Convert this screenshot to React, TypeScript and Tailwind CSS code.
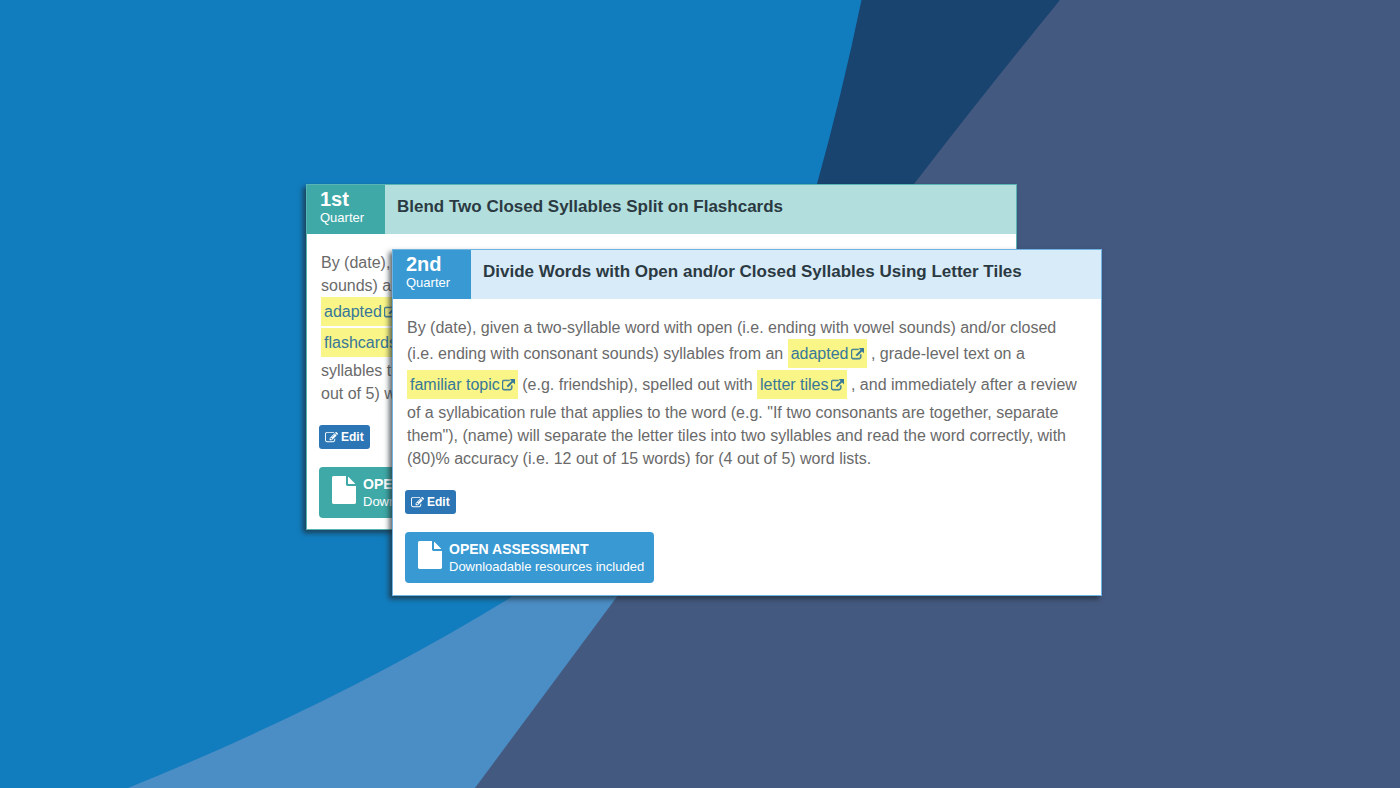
import type { ReactNode } from 'react';
import clsx from 'clsx';

type Tone = 'teal' | 'blue';

const tones = {
  teal: { border: 'border-[#58b5b3]', solid: 'bg-[#3fa9a8]', light: 'bg-[#b2dfdd]' },
  blue: { border: 'border-[#6fb4e3]', solid: 'bg-[#3899d3]', light: 'bg-[#d8ebf9]' },
};

function ExternalIcon() {
  return (
    <svg viewBox="0 0 1792 1792" className="mt-px size-[13px] fill-current stroke-current" strokeWidth="70" aria-hidden="true">
      <path d="M1408 928v320q0 119-84.500 203.500t-203.500 84.500h-832q-119 0-203.500-84.500t-84.500-203.500v-832q0-119 84.500-203.500t203.500-84.500h704q14 0 23 9t9 23v64q0 14-9 23t-23 9h-704q-66 0-113 47t-47 113v832q0 66 47 113t113 47h832q66 0 113-47t47-113v-320q0-14 9-23t23-9h64q14 0 23 9t9 23zm384-864v512q0 26-19 45t-45 19-45-19l-176-176-652 652q-10 10-23 10t-23-10l-114-114q-10-10-10-23t10-23l652-652-176-176q-19-19-19-45t19-45 45-19h512q26 0 45 19t19 45z" />
    </svg>
  );
}

function EditIcon() {
  return (
    <svg viewBox="0 0 1792 1792" className="size-[13px] fill-current" aria-hidden="true">
      <path d="M888 1184l116-116-152-152-116 116v56h96v96h56zm440-720q-16-16-33 1l-350 350q-17 17-1 33t33-1l350-350q17-17 1-33zm80 594v190q0 119-84.500 203.500t-203.500 84.500h-832q-119 0-203.500-84.500t-84.500-203.500v-832q0-119 84.500-203.500t203.500-84.500h832q63 0 117 25 15 7 18 23 3 17-9 29l-49 49q-14 14-32 8-23-6-45-6h-832q-66 0-113 47t-47 113v832q0 66 47 113t113 47h832q66 0 113-47t47-113v-126q0-13 9-22l64-64q15-15 35-7t20 29zm-96-738l288 288-672 672h-288v-288zm444 132l-92 92-288-288 92-92q28-28 68-28t68 28l152 152q28 28 28 68t-28 68z" />
    </svg>
  );
}

function FileIcon() {
  return (
    <svg viewBox="128 0 1536 1792" className="h-[28px] w-[24px] fill-current" aria-hidden="true">
      <path d="M1152 512v-472q22 14 36 28l408 408q14 14 28 36h-472zm-128 32q0 40 28 68t68 28h544v1056q0 40-28 68t-68 28h-1344q-40 0-68-28t-28-68v-1600q0-40 28-68t68-28h800v544z" />
    </svg>
  );
}

function Term({ children }: { children: ReactNode }) {
  return (
    <a
      href="#"
      className="mb-[2px] inline-flex h-[29px] items-center gap-[2px] bg-[#f9f586] px-[3px] align-middle text-[#37789a]"
    >
      {children}
      <ExternalIcon />
    </a>
  );
}

interface GoalCardProps {
  tone: Tone;
  quarter: string;
  title: string;
  className?: string;
  children: ReactNode;
}

function GoalCard({ tone, quarter, title, className, children }: GoalCardProps) {
  const t = tones[tone];
  return (
    <article
      className={clsx(
        'col-start-1 row-start-1 flex flex-col border bg-white shadow-[-3px_3px_5px_rgba(30,40,45,0.7)]',
        t.border,
        className,
      )}
    >
      <header className={clsx('flex h-[49px]', t.light)}>
        <div className={clsx('w-[78px] shrink-0 pt-[5px] pl-[13px] text-white', t.solid)}>
          <div className="text-[20px] leading-[19px] font-bold">{quarter}</div>
          <div className="text-[13px] leading-[18px]">Quarter</div>
        </div>
        <h2 className="pt-[10px] pl-3 text-[17px] leading-[24px] font-bold whitespace-nowrap text-[#2b3a42]">{title}</h2>
      </header>
      <div className="flex flex-col items-start px-3 pt-[17px] pb-[11px]">
        <p className="pl-[2px] text-[16px] leading-[23px] whitespace-nowrap text-[#6a6a6a]">{children}</p>
        <button
          type="button"
          className="mt-5 flex h-[24px] items-center gap-[3px] rounded-[3px] bg-[#2d76b5] px-[6px] text-[12px] font-bold text-white"
        >
          <EditIcon />
          Edit
        </button>
        <button
          type="button"
          className={clsx('mt-[18px] flex h-[51px] items-start gap-[7px] rounded-[4px] pt-[9px] pr-[10px] pl-[13px] text-left text-white', t.solid)}
        >
          <FileIcon />
          <span className="flex flex-col whitespace-nowrap">
            <span className="text-[14px] leading-[16px] font-bold">OPEN ASSESSMENT</span>
            <span className="text-[13px] leading-[20px]">Downloadable resources included</span>
          </span>
        </button>
      </div>
    </article>
  );
}

function Backdrop() {
  return (
    <svg
      viewBox="0 0 1400 788"
      preserveAspectRatio="none"
      className="absolute inset-0 -z-10 h-full w-full"
      aria-hidden="true"
    >
      <rect width="1400" height="788" fill="#127dbe" />
      <path d="M861.500 0Q842 94 817 184L700 400H914L1060 0Z" fill="#18446f" />
      <path d="M128 788Q340 702 510 598L640 500L700 560L475 788Z" fill="#4b8dc5" />
      <path d="M1060 0Q988 88 914 184L616 598L475 788H1400V0Z" fill="#445980" />
    </svg>
  );
}

export default function App() {
  return (
    <main className="relative isolate flex min-h-screen items-center justify-center pb-2 pl-2 font-['Liberation_Sans',Arial,sans-serif]">
      <Backdrop />
      <div className="grid w-full max-w-[796px]">
        <GoalCard tone="teal" quarter="1st" title="Blend Two Closed Syllables Split on Flashcards" className="mr-[85px] mb-[66px]">
          By (date),
          <br />
          sounds) a
          <br />
          <Term>adapted</Term>
          <br />
          <Term>flashcards</Term>
          <br />
          syllables to
          <br />
          out of 5) w
        </GoalCard>
        <GoalCard
          tone="blue"
          quarter="2nd"
          title="Divide Words with Open and/or Closed Syllables Using Letter Tiles"
          className="mt-[65px] ml-[86px]"
        >
          By (date), given a two-syllable word with open (i.e. ending with vowel sounds) and/or closed
          <br />
          (i.e. ending with consonant sounds) syllables from an <Term>adapted</Term> , grade-level text on a
          <br />
          <Term>familiar topic</Term> (e.g. friendship), spelled out with <Term>letter tiles</Term> , and immediately after a review
          <br />
          of a syllabication rule that applies to the word (e.g. "If two consonants are together, separate
          <br />
          them"), (name) will separate the letter tiles into two syllables and read the word correctly, with
          <br />
          (80)% accuracy (i.e. 12 out of 15 words) for (4 out of 5) word lists.
        </GoalCard>
      </div>
    </main>
  );
}
